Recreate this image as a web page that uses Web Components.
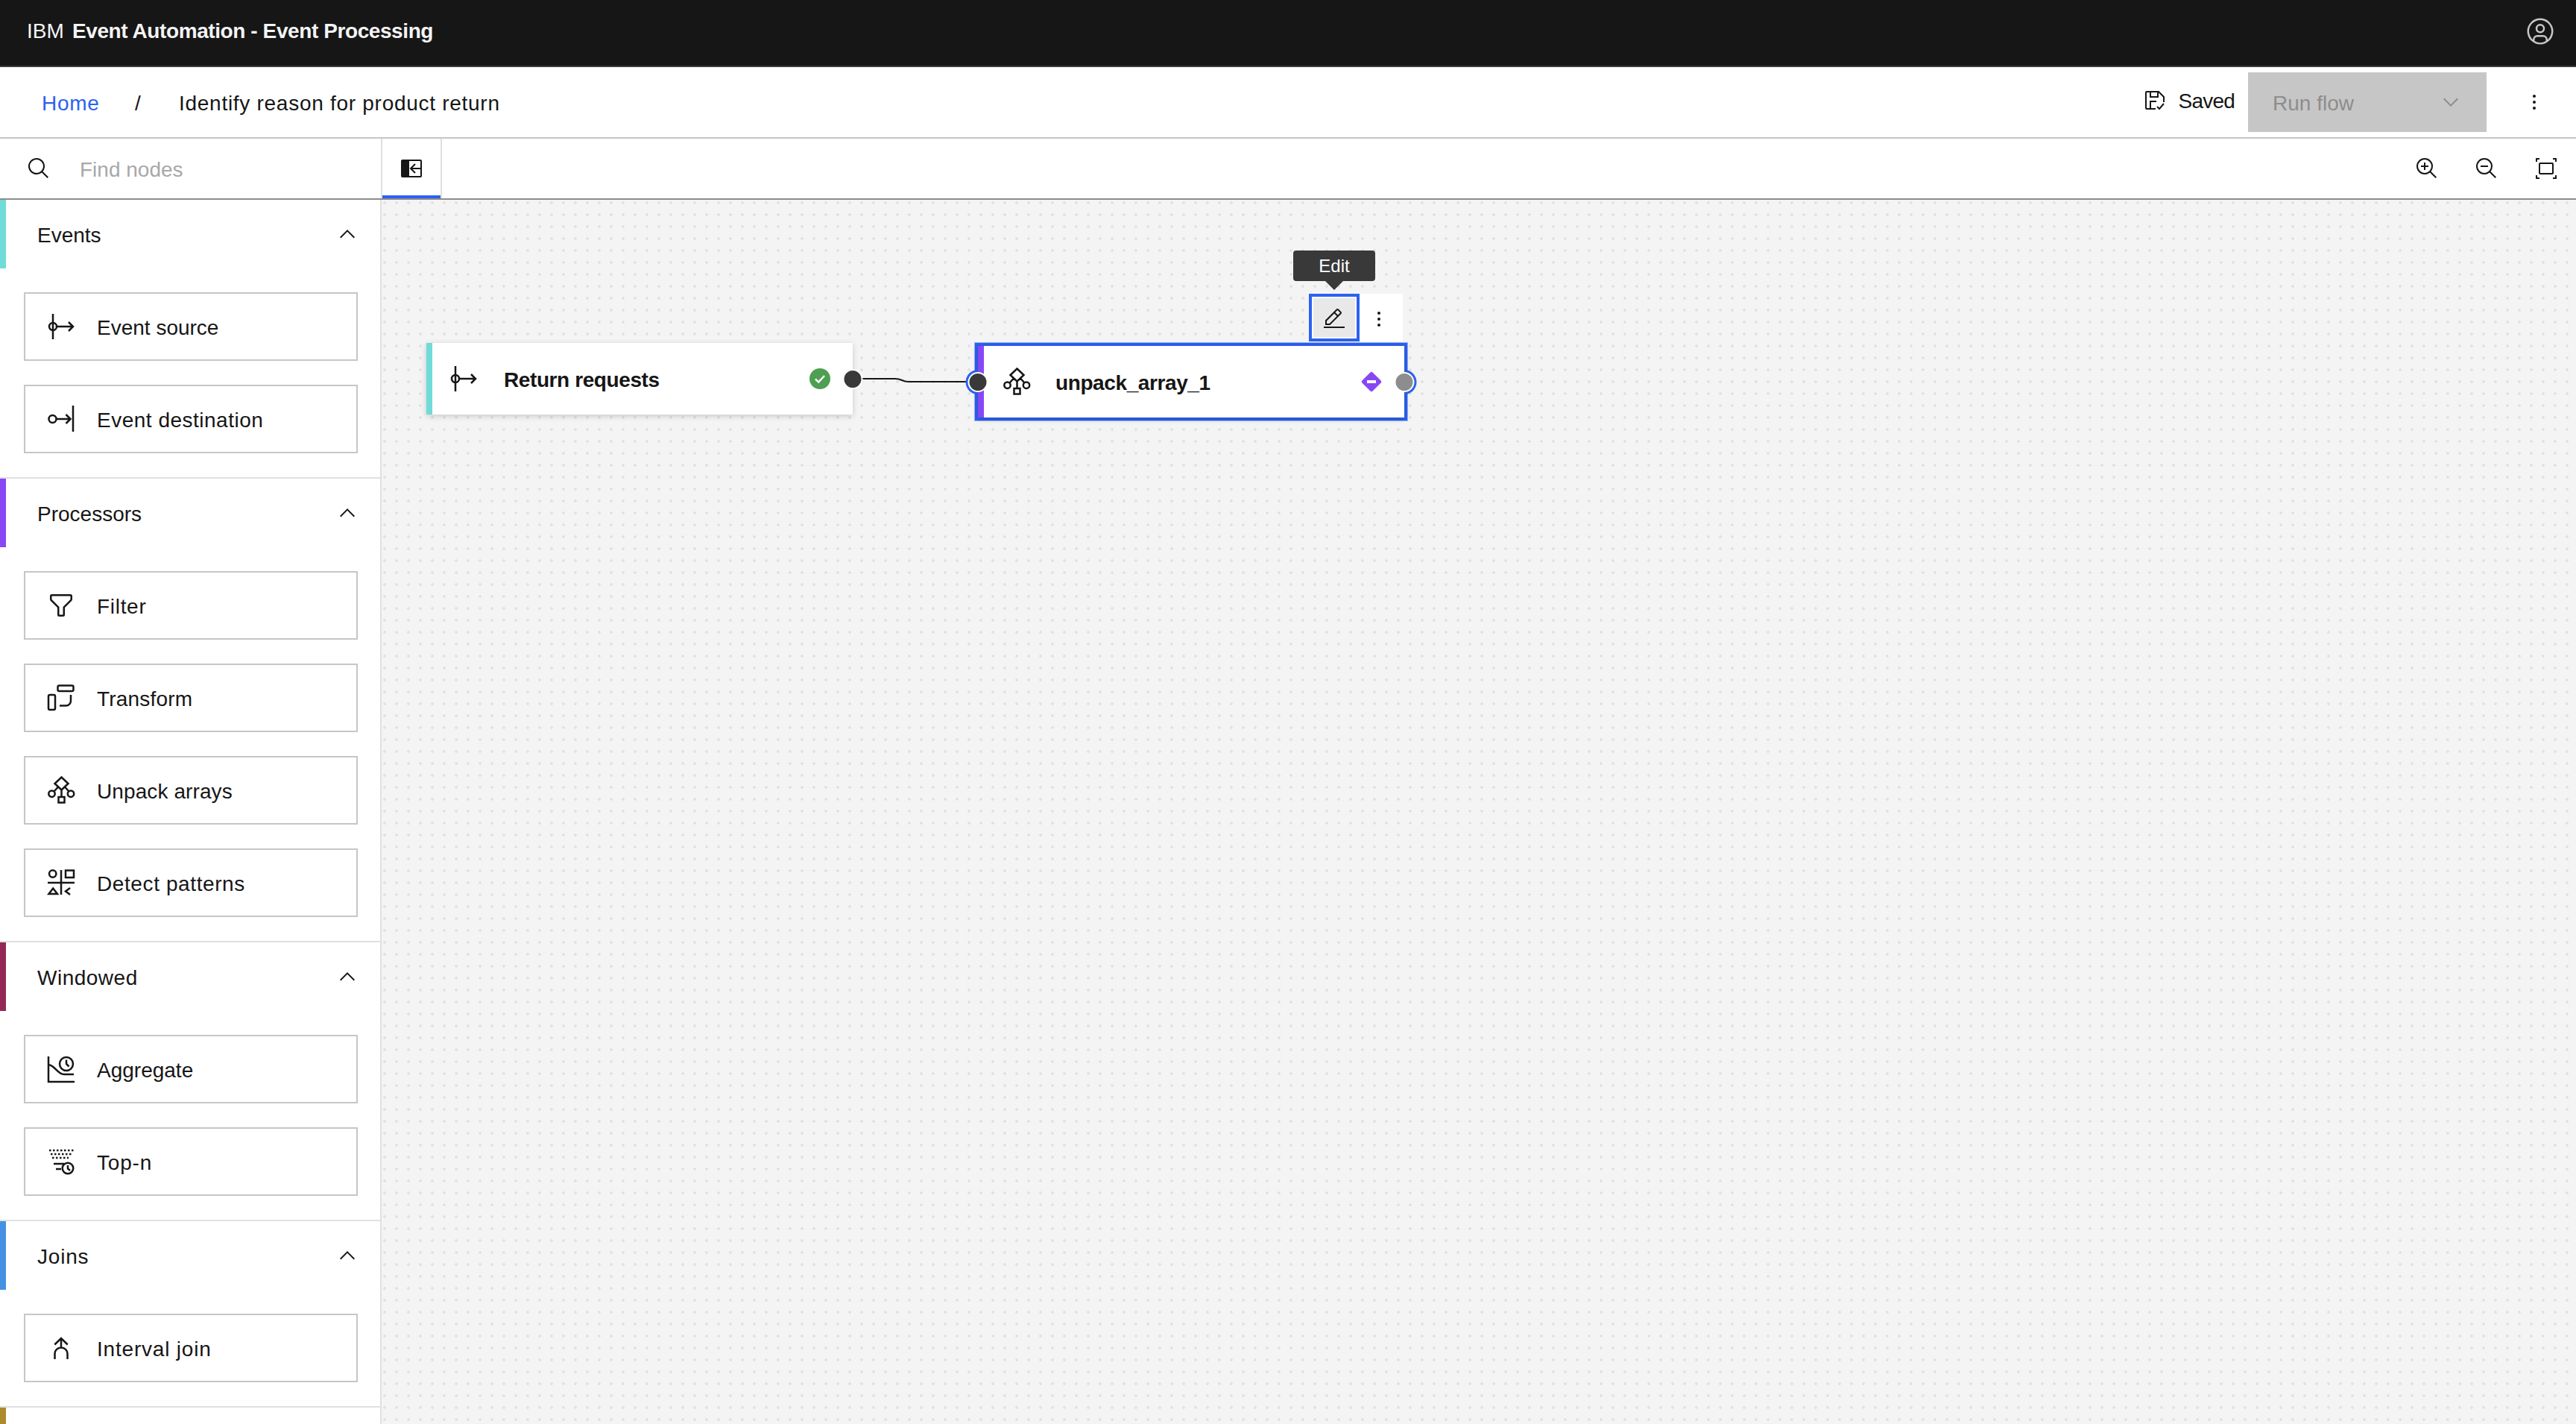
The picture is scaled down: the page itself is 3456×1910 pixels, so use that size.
<!doctype html>
<html lang="en">
<head>
<meta charset="utf-8">
<title>Event Processing</title>
<style>
  html, body { margin: 0; height: 100%; overflow: hidden; }
  body { font-family: "Liberation Sans", Arial, sans-serif; font-size: 28px; color: #161616; background: #fff; }
</style>
</head>
<body>
<ep-app>
  <ep-header slot="header" prefix="IBM" name="Event Automation - Event Processing"></ep-header>
  <ep-crumbs slot="crumbs" home="Home" current="Identify reason for product return"></ep-crumbs>
  <ep-toolbar slot="toolbar"></ep-toolbar>
  <ep-palette slot="palette">
    <ep-group label="Events" color="#70dbd7">
      <ep-item icon="source">Event source</ep-item>
      <ep-item icon="dest" style="letter-spacing:.5px">Event destination</ep-item>
    </ep-group>
    <ep-group label="Processors" color="#8747f5">
      <ep-item icon="filter" style="letter-spacing:.7px">Filter</ep-item>
      <ep-item icon="transform" style="letter-spacing:.2px">Transform</ep-item>
      <ep-item icon="unpack" style="letter-spacing:.1px">Unpack arrays</ep-item>
      <ep-item icon="detect" style="letter-spacing:.6px">Detect patterns</ep-item>
    </ep-group>
    <ep-group label="Windowed" color="#942958" style="letter-spacing:.5px">
      <ep-item icon="aggregate" style="letter-spacing:0">Aggregate</ep-item>
      <ep-item icon="topn" style="letter-spacing:.8px">Top-n</ep-item>
    </ep-group>
    <ep-group label="Joins" color="#4690e4" style="letter-spacing:.8px">
      <ep-item icon="join">Interval join</ep-item>
    </ep-group>
    <ep-group color="#ae8a2c"></ep-group>
  </ep-palette>
  <ep-canvas slot="canvas">
    <ep-node style="left:60px;top:192px" icon="source" accent="#70dbd7" status="ok">Return requests</ep-node>
    <ep-node style="left:800px;top:196px" icon="unpack" accent="#8747f5" status="warn" selected>unpack_array_1</ep-node>
  </ep-canvas>
</ep-app>

<script>
// icons: fill paths are from the carbon set, the product ones are stroked by hand
const S = 'fill="none" stroke="currentColor" stroke-width="2.5"';
const ICONS = {
  user: [32, '<path fill="currentColor" d="M16 8a5 5 0 1 0 5 5 5 5 0 0 0-5-5zm0 8a3 3 0 1 1 3-3 3.003 3.003 0 0 1-3 3z"/><path fill="currentColor" d="M16 2a14 14 0 1 0 14 14A14.016 14.016 0 0 0 16 2zm-6 24.377V25a3.003 3.003 0 0 1 3-3h6a3.003 3.003 0 0 1 3 3v1.377a11.899 11.899 0 0 1-12 0zm13.993-1.451A5.002 5.002 0 0 0 19 20h-6a5.002 5.002 0 0 0-4.992 4.926 12 12 0 1 1 15.985 0z"/>'],
  search: [32, '<path fill="currentColor" d="M29 27.586l-7.552-7.552a11.018 11.018 0 1 0-1.414 1.414L27.586 29zM4 13a9 9 0 1 1 9 9 9.01 9.01 0 0 1-9-9z"/>'],
  zoomin: [32, '<path fill="currentColor" d="M18 12h-4V8h-2v4H8v2h4v4h2v-4h4v-2z"/><path fill="currentColor" d="M21.448 20A10.856 10.856 0 0 0 24 13a11 11 0 1 0-11 11 10.856 10.856 0 0 0 7-2.552L27.586 29 29 27.586zM13 22a9 9 0 1 1 9-9 9.01 9.01 0 0 1-9 9z"/>'],
  zoomout: [32, '<path fill="currentColor" d="M8 12h10v2H8z"/><path fill="currentColor" d="M21.448 20A10.856 10.856 0 0 0 24 13a11 11 0 1 0-11 11 10.856 10.856 0 0 0 7-2.552L27.586 29 29 27.586zM13 22a9 9 0 1 1 9-9 9.01 9.01 0 0 1-9 9z"/>'],
  fit: [32, '<path fill="none" stroke="currentColor" stroke-width="2" d="M3 7V3h4M25 3h4v4M3 25v4h4M25 29h4v-4"/><rect x="7" y="9" width="18" height="14" rx="1" fill="none" stroke="currentColor" stroke-width="2"/>'],
  panel: [32, '<rect x="2" y="4" width="28" height="24" rx="2" fill="currentColor"/><rect x="13" y="6" width="15" height="20" fill="#fff"/><path fill="none" stroke="currentColor" stroke-width="2" d="M28 16H16M21 10l-6 6 6 6"/>'],
  up: [32, '<path fill="currentColor" d="M16 10l10 10-1.4 1.4-8.6-8.6-8.6 8.6L6 20z"/>'],
  down: [32, '<path fill="currentColor" d="M16 22L6 12l1.4-1.4 8.6 8.6 8.6-8.6L26 12z"/>'],
  more: [32, '<circle cx="16" cy="8" r="2" fill="currentColor"/><circle cx="16" cy="16" r="2" fill="currentColor"/><circle cx="16" cy="24" r="2" fill="currentColor"/>'],
  edit: [32, '<path fill="currentColor" d="M2 26h28v2H2zM25.4 9c.8-.8.8-2 0-2.8l-3.6-3.6c-.8-.8-2-.8-2.8 0l-15 15V24h6.4l15-15zm-5-5L24 7.6l-3 3L17.4 7l3-3zM6 22v-3.6l10-10 3.6 3.6-10 10H6z"/>'],
  saved: [32, `<path fill="none" stroke="currentColor" stroke-width="2" d="M18 28H6a1 1 0 0 1-1-1V6a1 1 0 0 1 1-1h16l7 7v7M11 5v7h10V5M11 27V18h8"/><path fill="none" stroke="currentColor" stroke-width="2" d="M20 25l3 3 6-7"/>`],
  source: [40, `<path ${S} d="M9 3v34M14 20h22M30 14l6 6-6 6"/><circle cx="9" cy="20" r="5" ${S}/>`],
  dest: [40, `<circle cx="8.5" cy="20" r="5" ${S}/><path ${S} d="M14 20h18.5M26.5 14l6 6-6 6M36 2v35"/>`],
  filter: [40, '<g transform="scale(1.25)"><path fill="currentColor" d="M18 28h-4a2 2 0 0 1-2-2v-7.59L4.59 11A2 2 0 0 1 4 9.59V6a2 2 0 0 1 2-2h20a2 2 0 0 1 2 2v3.59a2 2 0 0 1-.59 1.41L20 18.41V26a2 2 0 0 1-2 2zM6 6v3.59l8 8V26h4v-8.41l8-8V6z"/></g>'],
  transform: [40, `<rect x="15.5" y="3.5" width="21" height="7.5" rx="2" ${S}/><rect x="3" y="16" width="9" height="20" rx="2" ${S}/><path ${S} d="M33 16v8a6.5 6.5 0 0 1-6.5 6.5H18"/>`],
  unpack: [40, `<path ${S} d="M20.5 2.5l9 8.5-9 8.5-9-8.5zM20.5 19.5V29M16 15.5l-5.500 6M25 15.500l5.500 6"/><circle cx="7.500" cy="24.700" r="4.200" ${S}/><circle cx="33" cy="24.700" r="4.200" ${S}/><rect x="16.500" y="29" width="8" height="7.500" ${S}/>`],
  detect: [40, `<path ${S} d="M20 3v33M2 20h36"/><circle cx="8.700" cy="8" r="4.700" ${S}/><rect x="26" y="3.500" width="11" height="9.500" ${S}/><path ${S} d="M3.500 35h11.500L9.200 27.500zM32 27l-6 4.500 6 4.500"/>`],
  aggregate: [40, `<path ${S} d="M3 3v34h35M3 14c9 1 12 13 21 13h13"/><circle cx="27" cy="13" r="9" fill="#fff" stroke="currentColor" stroke-width="2.500"/><path ${S} d="M27 7.500V13l3.500 3.500"/>`],
  topn: [40, `<path ${S} stroke-dasharray="2.500 2.500" d="M4 5h33M6 10h29M8 15h22"/><path ${S} d="M10 23h14M13 30h7"/><circle cx="29" cy="29" r="7.300" fill="#fff" stroke="currentColor" stroke-width="2.500"/><path ${S} d="M29 25v4.500l3 2.500"/>`],
  join: [40, `<path ${S} d="M11.300 15.500L20 7l8.700 8.500M20 7v12M11.500 35v-7.500a8.500 8 0 0 1 17 0V35"/>`]
};

function icon(name, size) {
  const [box, body] = ICONS[name];
  return `<svg width="${size}" height="${size}" viewBox="0 0 ${box} ${box}" style="display:block;flex:none">${body}</svg>`;
}

class EpApp extends HTMLElement {
  constructor() {
    super();
    this.attachShadow({ mode: 'open' }).innerHTML = `
      <style>
        :host { display: flex; flex-direction: column; height: 1910px; overflow: hidden; }
        .work { flex: 1; display: flex; min-height: 0; }
      </style>
      <slot name="header"></slot>
      <slot name="crumbs"></slot>
      <slot name="toolbar"></slot>
      <div class="work"><slot name="palette"></slot><slot name="canvas"></slot></div>`;
  }
}

class EpHeader extends HTMLElement {
  constructor() { super(); this.attachShadow({ mode: 'open' }); }
  connectedCallback() {
    this.shadowRoot.innerHTML = `
      <style>
        :host { display: flex; align-items: center; justify-content: space-between; box-sizing: border-box; height: 90px;
                padding: 0 28px 4px 36px; background: #161616; border-bottom: 2px solid #393939; color: #f4f4f4; }
        .prefix { display: inline-block; width: 61px; }
        .name { font-weight: 600; letter-spacing: -.41px; }
        .user { color: #c6c6c6; }
      </style>
      <div><span class="prefix">${this.getAttribute('prefix')}</span><span class="name">${this.getAttribute('name')}</span></div>
      <div class="user">${icon('user', 40)}</div>`;
  }
}

class EpCrumbs extends HTMLElement {
  constructor() { super(); this.attachShadow({ mode: 'open' }); }
  connectedCallback() {
    this.shadowRoot.innerHTML = `
      <style>
        :host { display: flex; align-items: center; height: 94px; padding-left: 56px; border-bottom: 2px solid #c6c6c6; letter-spacing: .72px; }
        span { padding-top: 4px; }
        .home { color: #2c61f1; width: 125px; }
        .sep { width: 59px; }
        .save { margin-left: auto; display: flex; align-items: center; gap: 17px; margin-top: -6px; letter-spacing: -.8px; }
        .run { display: flex; align-items: center; justify-content: space-between; box-sizing: border-box; width: 320px; height: 80px;
               margin-left: 18px; padding: 0 32px 0 33px; background: #c6c6c6; color: #8d8d8d; letter-spacing: 0; margin-right: 48px; }
        .more { margin-right: 40px; }
      </style>
      <span class="home">${this.getAttribute('home')}</span>
      <span class="sep">/</span>
      <span>${this.getAttribute('current')}</span>
      <div class="save">${icon('saved', 32)}<span>Saved</span></div>
      <div class="run"><span>Run flow</span>${icon('down', 32)}</div>
      <div class="more">${icon('more', 32)}</div>`;
  }
}

class EpToolbar extends HTMLElement {
  constructor() { super(); this.attachShadow({ mode: 'open' }); }
  connectedCallback() {
    this.shadowRoot.innerHTML = `
      <style>
        :host { display: flex; align-items: stretch; height: 80px; border-bottom: 2px solid #8d8d8d; }
        .find { box-sizing: border-box; width: 511px; display: flex; align-items: center; gap: 39px; padding-left: 36px; color: #a8a8a8; }
        .find span { padding-top: 4px; }
        .find svg { color: #161616; }
        .tab { box-sizing: border-box; width: 82px; display: flex; align-items: center; justify-content: center;
               border: solid #e0e0e0; border-width: 0 2px; position: relative; }
        .tab::after { content: ""; position: absolute; left: 0; right: 0; bottom: 0; height: 4px; background: #2c61f1; }
        .zoom { margin-left: auto; display: flex; align-items: center; gap: 48px; padding-right: 24px; }
      </style>
      <div class="find">${icon('search', 32)}<span>Find nodes</span></div>
      <div class="tab">${icon('panel', 32)}</div>
      <div class="zoom">${icon('zoomin', 32)}${icon('zoomout', 32)}${icon('fit', 32)}</div>`;
  }
}

class EpPalette extends HTMLElement {
  constructor() {
    super();
    this.attachShadow({ mode: 'open' }).innerHTML = `
      <style>
        :host { display: block; box-sizing: border-box; flex: none; width: 512px; height: 100%; overflow: hidden;
                border-right: 2px solid #e0e0e0; background: #fff; }
      </style>
      <slot></slot>`;
  }
}

class EpGroup extends HTMLElement {
  constructor() { super(); this.attachShadow({ mode: 'open' }); }
  connectedCallback() {
    const label = this.getAttribute('label') || '';
    this.shadowRoot.innerHTML = `
      <style>
        :host { display: block; border-bottom: 2px solid #e0e0e0; }
        .head { display: flex; align-items: center; justify-content: space-between; box-sizing: border-box; height: 92px;
                padding: 0 28px 0 42px; border-left: 8px solid ${this.getAttribute('color')}; }
        .head span { padding-top: 4px; }
        .items { display: flex; flex-direction: column; gap: 32px; padding: 32px 30px 32px 32px; }
      </style>
      <div class="head"><span>${label}</span>${label ? icon('up', 32) : ''}</div>
      <div class="items"><slot></slot></div>`;
  }
}

class EpItem extends HTMLElement {
  constructor() { super(); this.attachShadow({ mode: 'open' }); }
  connectedCallback() {
    this.shadowRoot.innerHTML = `
      <style>
        :host { display: flex; align-items: center; box-sizing: border-box; height: 92px; gap: 28px; padding-left: 28px;
                border: 2px solid #c6c6c6; background: #fff; }
        span { padding-top: 4px; }
      </style>
      ${icon(this.getAttribute('icon'), 40)}<span><slot></slot></span>`;
  }
}

class EpCanvas extends HTMLElement {
  constructor() {
    super();
    this.attachShadow({ mode: 'open' }).innerHTML = `
      <style>
        :host { display: block; flex: 1; position: relative; overflow: hidden; background-color: #f4f4f4;
                background-image: radial-gradient(circle at 4px 4px, #e2e2e2 2px, transparent 2px);
                background-size: 16px 16px; }
        svg { position: absolute; left: 0; top: 0; }
      </style>
      <svg width="900" height="400" fill="none"><path d="M631 240h58c10 0 8 4 18 4h84" stroke="#161616" stroke-width="2"/></svg>
      <slot></slot>`;
  }
}

class EpNode extends HTMLElement {
  constructor() { super(); this.attachShadow({ mode: 'open' }); }
  connectedCallback() {
    const selected = this.hasAttribute('selected');
    const badge = this.getAttribute('status') === 'ok'
      ? `<svg width="28" height="28" viewBox="0 0 28 28"><circle cx="14" cy="14" r="14" fill="#4f9f52"/><path d="M8 14.500l4.200 4L20 10" fill="none" stroke="#fff" stroke-width="2.500"/></svg>`
      : `<svg width="30" height="30" viewBox="0 0 30 30"><rect x="5" y="5" width="20" height="20" rx="2.500" transform="rotate(45 15 15)" fill="#8747f5"/><rect x="9" y="13" width="12" height="4" fill="#fff"/></svg>`;
    this.shadowRoot.innerHTML = `
      <style>
        :host { display: block; position: absolute; width: 572px; height: 96px; font-weight: 600; letter-spacing: -.4px; }
        .body { position: relative; z-index: 1; box-sizing: border-box; height: 100%; display: flex; align-items: center;
                gap: ${selected ? 32 : 34}px; padding-left: ${selected ? 24 : 22}px; background: #fff; border-left: 8px solid ${this.getAttribute('accent')};
                box-shadow: 0 2px 8px rgba(0,0,0,.18); }
        .label { padding-top: 4px; }
        .badge { position: absolute; right: ${selected ? 29 : 30}px; top: 50%; transform: translateY(-50%); height: ${selected ? 30 : 28}px; }
        .port { position: absolute; z-index: 2; top: 50%; width: 23px; height: 23px; margin-top: -11.500px; border-radius: 50%; box-sizing: content-box;
                border: 2px solid #fff; transform: translate(-50%, -2px); }
        .port.in { left: 0; background: #393939; }
        .port.out { left: 100%; background: ${selected ? '#8d8d8d' : '#393939'}; }
        .halo { position: absolute; top: 50%; width: 33px; height: 33px; margin-top: -16.500px; border-radius: 50%; background: #2c61f1; transform: translateX(-50%); }
        .frame { position: absolute; z-index: 1; inset: -4px; border: 4px solid #2c61f1; outline: 1px solid rgba(44,97,241,.45); pointer-events: none; }
        .actions { position: absolute; z-index: 3; left: 444px; top: -70px; display: flex; width: 126px; height: 64px; background: #fff; }
        .edit { box-sizing: border-box; width: 68px; height: 64px; display: flex; align-items: center; justify-content: center; padding-top: 4px;
                border: 4px solid #2c61f1; background: #e8e8e8; box-shadow: inset 0 0 0 2px #fff; }
        .dots { flex: 1; display: flex; align-items: center; justify-content: center; padding: 4px 6px 0 0; }
        .tip { position: absolute; z-index: 4; left: 423px; top: -128px; width: 110px; height: 41px; background: #393939; color: #fff;
               border-radius: 4px; font-size: 24px; font-weight: 400; letter-spacing: 0; display: flex; align-items: center; justify-content: center; }
        .tip::after { content: ""; position: absolute; left: 50%; top: 100%; margin-left: -12px; border: solid transparent;
               border-width: 12px 12px 0; border-top-color: #393939; }
      </style>
      ${selected ? `<div class="halo" style="left:0"></div><div class="halo" style="left:100%"></div><div class="frame"></div>
        <div class="tip">Edit</div>
        <div class="actions"><div class="edit">${icon('edit', 32)}</div><div class="dots">${icon('more', 32)}</div></div>` : ''}
      <div class="body">${icon(this.getAttribute('icon'), 40)}<span class="label"><slot></slot></span><div class="badge">${badge}</div></div>
      ${selected ? '<div class="port in"></div>' : ''}
      <div class="port out"></div>`;
  }
}

customElements.define('ep-app', EpApp);
customElements.define('ep-header', EpHeader);
customElements.define('ep-crumbs', EpCrumbs);
customElements.define('ep-toolbar', EpToolbar);
customElements.define('ep-palette', EpPalette);
customElements.define('ep-group', EpGroup);
customElements.define('ep-item', EpItem);
customElements.define('ep-canvas', EpCanvas);
customElements.define('ep-node', EpNode);
</script>
</body>
</html>
